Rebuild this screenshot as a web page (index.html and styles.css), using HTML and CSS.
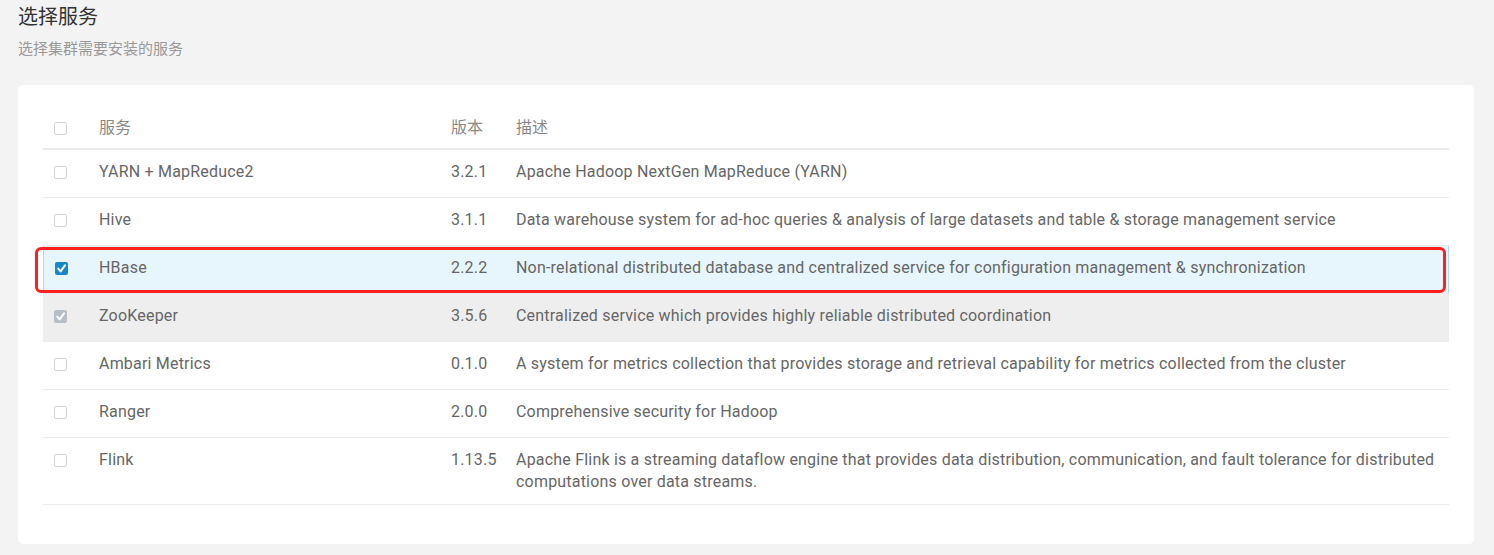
FILE: index.html
```html
<!DOCTYPE html>
<html lang="zh">
<head>
<meta charset="utf-8">
<title>选择服务</title>
<link rel="stylesheet" href="styles.css">
</head>
<body>
<div class="page">
  <h1 class="title">选择服务</h1>
  <p class="subtitle">选择集群需要安装的服务</p>
  <div class="card">
    <div class="table">
      <div class="row head">
        <div class="cell cb"><span class="box"></span></div>
        <div class="cell">服务</div>
        <div class="cell">版本</div>
        <div class="cell">描述</div>
      </div>
      <div class="row">
        <div class="cell cb"><span class="box"></span></div>
        <div class="cell">YARN + MapReduce2</div>
        <div class="cell">3.2.1</div>
        <div class="cell">Apache Hadoop NextGen MapReduce (YARN)</div>
      </div>
      <div class="row">
        <div class="cell cb"><span class="box"></span></div>
        <div class="cell">Hive</div>
        <div class="cell">3.1.1</div>
        <div class="cell">Data warehouse system for ad-hoc queries &amp; analysis of large datasets and table &amp; storage management service</div>
      </div>
      <div class="row selected">
        <div class="cell cb"><span class="box checked"><svg viewBox="0 0 13 13" width="13" height="13"><path d="M3.2 6.6 L5.6 9.4 L10 3.4" fill="none" stroke="#fff" stroke-width="2" stroke-linecap="round" stroke-linejoin="round"/></svg></span></div>
        <div class="cell">HBase</div>
        <div class="cell">2.2.2</div>
        <div class="cell">Non-relational distributed database and centralized service for configuration management &amp; synchronization</div>
        <div class="highlight"></div>
      </div>
      <div class="row disabled">
        <div class="cell cb"><span class="box checked gray"><svg viewBox="0 0 13 13" width="13" height="13"><path d="M3.2 6.6 L5.6 9.4 L10 3.4" fill="none" stroke="#fff" stroke-width="2" stroke-linecap="round" stroke-linejoin="round"/></svg></span></div>
        <div class="cell">ZooKeeper</div>
        <div class="cell">3.5.6</div>
        <div class="cell">Centralized service which provides highly reliable distributed coordination</div>
      </div>
      <div class="row">
        <div class="cell cb"><span class="box"></span></div>
        <div class="cell">Ambari Metrics</div>
        <div class="cell">0.1.0</div>
        <div class="cell">A system for metrics collection that provides storage and retrieval capability for metrics collected from the cluster</div>
      </div>
      <div class="row">
        <div class="cell cb"><span class="box"></span></div>
        <div class="cell">Ranger</div>
        <div class="cell">2.0.0</div>
        <div class="cell">Comprehensive security for Hadoop</div>
      </div>
      <div class="row">
        <div class="cell cb"><span class="box"></span></div>
        <div class="cell">Flink</div>
        <div class="cell">1.13.5</div>
        <div class="cell">Apache Flink is a streaming dataflow engine that provides data distribution, communication, and fault tolerance for distributed computations over data streams.</div>
      </div>
    </div>
  </div>
</div>
</body>
</html>
```

FILE: styles.css
```css
html, body {
  margin: 0;
  padding: 0;
  background: #f3f3f3;
}
body {
  font-family: Roboto, "Noto Sans CJK SC", sans-serif;
  color: #666;
}
.page {
  padding: 4px 20px 0 18px;
}
.title {
  margin: 0;
  font-size: 20px;
  line-height: 26px;
  font-weight: normal;
  color: #333;
}
.subtitle {
  margin: 10px 0 0;
  font-size: 15px;
  line-height: 18px;
  color: #999;
}
.card {
  margin-top: 27px;
  background: #fff;
  border-radius: 5px;
  padding: 20px 25px 39px;
}
.table {
  display: flex;
  flex-direction: column;
}
.row {
  position: relative;
  display: grid;
  grid-template-columns: 56px 352px 65px 1fr;
  align-items: start;
  min-height: 48px;
  box-sizing: border-box;
  padding: 11px 6px 11px 0;
  border-bottom: 1px solid #ebebeb;
  font-size: 16px;
  line-height: 22px;
  letter-spacing: 0.2px;
}
.row.head {
  min-height: 45px;
  padding-top: 12px;
  padding-bottom: 9px;
  border-bottom: 2px solid #ebebeb;
  color: #888;
  letter-spacing: 0;
}
.cell.cb {
  padding-left: 11px;
  display: flex;
  align-items: center;
  height: 22px;
}
.box {
  display: block;
  width: 13px;
  height: 13px;
  box-sizing: border-box;
  border: 1px solid #d4d4d4;
  border-radius: 2px;
  background: #fff;
  position: relative;
}
.box.checked {
  border: none;
  background: #1787c8;
}
.box.checked.gray {
  background: #b7bec6;
}
.box svg {
  display: block;
}
.row.selected {
  background: #e7f5fc;
  border-left: 1px solid #acdcf3;
  border-right: 1px solid #acdcf3;
  grid-template-columns: 55px 352px 65px 1fr;
}
.row.disabled {
  background: #eeeeee;
}
.highlight {
  position: absolute;
  left: -9px;
  top: 1px;
  width: 1411px;
  height: 46px;
  box-sizing: border-box;
  border: 3px solid #ff1f1f;
  border-radius: 6px;
  pointer-events: none;
}
```
